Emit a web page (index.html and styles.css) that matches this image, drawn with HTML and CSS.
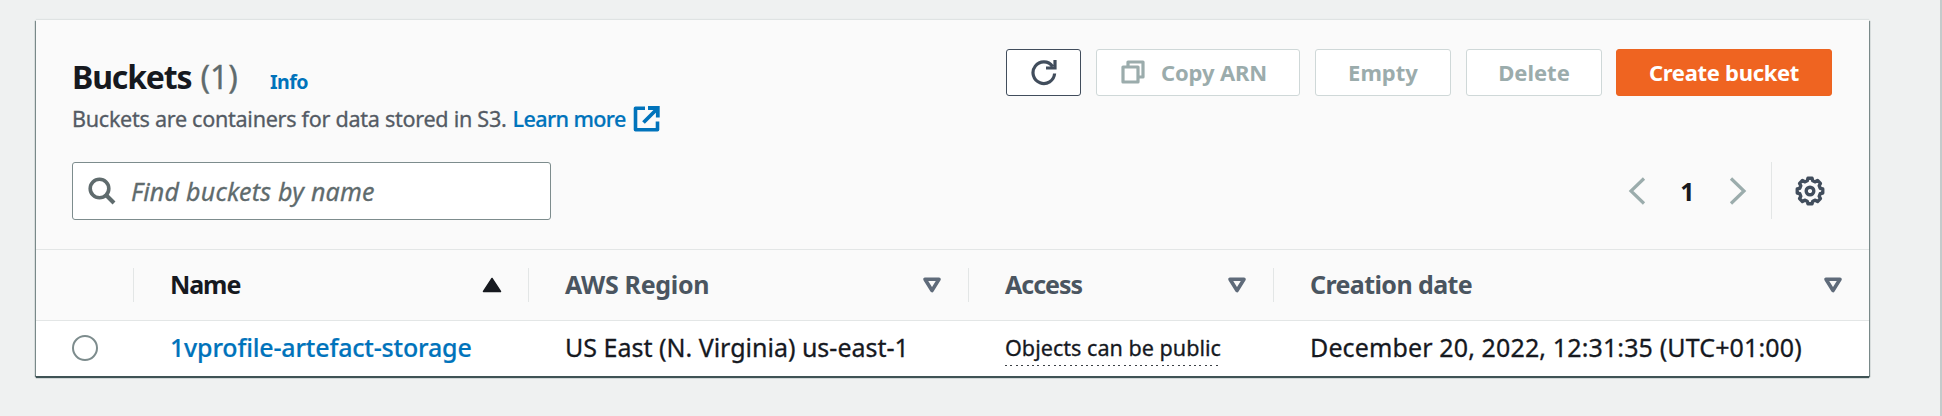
FILE: index.html
```html
<!DOCTYPE html>
<html lang="en">
<head>
<meta charset="utf-8">
<title>Buckets</title>
<link rel="stylesheet" href="styles.css">
</head>
<body>
<main class="panel">
  <header class="head">
    <div class="heading">
      <div class="title-row">
        <h1 class="title">Buckets</h1><span class="count">(1)</span><a class="info">Info</a>
      </div>
      <p class="desc"><span>Buckets are containers for data stored in S3.</span><a class="learn">Learn more</a><svg class="ext" viewBox="0 0 27 26"><path d="M12 2.200H2.500v21.600H24.500V15.500" fill="none" stroke="#0073bb" stroke-width="3.600" stroke-linejoin="round"/><path d="M15 2h9.800v9.500M24 3 10.500 16.500" fill="none" stroke="#0073bb" stroke-width="3.800"/></svg></p>
    </div>
    <div class="actions">
      <button class="btn refresh"><svg width="26" height="26" viewBox="0 0 26 26"><path d="M23.600 13.500A10.800 10.800 0 1 1 21.600 6.400M24 0v8h-9" fill="none" stroke="#414d5c" stroke-width="3.200"/></svg></button>
      <button class="btn off copy"><svg width="24" height="24" viewBox="0 0 24 24"><path d="M2 7h15v15H2zM7 7V2h15v15h-5" fill="none" stroke="#9bacac" stroke-width="3.200" stroke-linejoin="round"/></svg><span>Copy ARN</span></button>
      <button class="btn off small">Empty</button>
      <button class="btn off small">Delete</button>
      <button class="btn primary">Create bucket</button>
    </div>
  </header>
  <div class="tools">
    <div class="search"><svg width="28" height="28" viewBox="0 0 28 28"><circle cx="11.500" cy="11.500" r="9.300" fill="none" stroke="#5f6b6d" stroke-width="3.600"/><path d="m18 18 8 8" stroke="#5f6b6d" stroke-width="4"/></svg><span class="placeholder">Find buckets by name</span></div>
    <div class="pager">
      <svg width="18" height="28" viewBox="0 0 18 28"><path d="M16 1.500 3 14l13 12.500" fill="none" stroke="#9bacac" stroke-width="3.200"/></svg>
      <span class="page">1</span>
      <svg width="18" height="28" viewBox="0 0 18 28"><path d="M2 1.500 15 14 2 26.500" fill="none" stroke="#9bacac" stroke-width="3.200"/></svg>
      <div class="settings"><svg width="30" height="30" viewBox="-15 -15 30 30"><path class="gear" d=""/><circle r="3.800" fill="none" stroke="#414d5c" stroke-width="3.400"/></svg></div>
    </div>
  </div>
  <div class="row labels">
    <div class="cell pick"></div>
    <div class="cell name dark"><span class="t-name">Name</span><svg width="20" height="16" viewBox="0 0 20 16"><path d="M10 1.500 18.500 14.500h-17z" fill="#16191f" stroke="#16191f" stroke-width="1.500" stroke-linejoin="round"/></svg></div>
    <div class="cell region"><span class="t-region">AWS Region</span><svg width="20" height="16" viewBox="0 0 20 16"><path d="M3 2.300h14L10 13.500z" fill="none" stroke="#5f6b7a" stroke-width="3.600" stroke-linejoin="round"/></svg></div>
    <div class="cell access"><span class="t-access">Access</span><svg width="20" height="16" viewBox="0 0 20 16"><path d="M3 2.300h14L10 13.500z" fill="none" stroke="#5f6b7a" stroke-width="3.600" stroke-linejoin="round"/></svg></div>
    <div class="cell date"><span class="t-date">Creation date</span><svg width="20" height="16" viewBox="0 0 20 16"><path d="M3 2.300h14L10 13.500z" fill="none" stroke="#5f6b7a" stroke-width="3.600" stroke-linejoin="round"/></svg></div>
  </div>
  <div class="row item">
    <div class="cell pick"><span class="radio"></span></div>
    <div class="cell name"><a class="bucket">1vprofile-artefact-storage</a></div>
    <div class="cell region"><span>US East (N. Virginia) us-east-1</span></div>
    <div class="cell access"><span class="public">Objects can be public</span></div>
    <div class="cell date"><span class="created">December 20, 2022, 12:31:35 (UTC+01:00)</span></div>
  </div>
</main>
<script src="gear.js"></script>
</body>
</html>
```
FILE: gear.js
```js
// Eight-toothed cog outline.
const points = [];
for (let i = 0; i < 8; i++) {
  for (const [offset, radius] of [[-15, 10.6], [-9, 12.900], [9, 12.900], [15, 10.6]]) {
    const angle = (i * 45 + offset) * Math.PI / 180;
    points.push((Math.cos(angle) * radius).toFixed(2) + " " + (Math.sin(angle) * radius).toFixed(2));
  }
}
document.querySelector(".gear").setAttribute("d", "M" + points.join("L") + "Z");
```
FILE: styles.css
```css
* { box-sizing: border-box; }
body {
  margin: 0;
  height: 416px;
  padding: 20px 71px 0 36px;
  border-right: 2px solid #c3cbcb;
  background: #eff1f1;
  font: 400 25px/34px "Noto Sans", sans-serif;
  color: #16191f;
  overflow: hidden;
  white-space: nowrap;
}
.panel {
  width: 1833px;
  height: 356px;
  background: #fafafa;
  box-shadow: 0 -1px 1px #dfe3e3, 0 2px 1px #3f5355, 1px 1px 1px #6d7d7e, -1px 1px 1px #6d7d7e;
}
.head { display: flex; justify-content: space-between; height: 142px; padding: 29px 37px 0 36px; }
.heading { padding-top: 5px; }
.title-row { display: flex; align-items: baseline; height: 45px; line-height: 45px; }
.title { margin: 0; font-size: 32px; font-weight: 700; letter-spacing: -1.150px; }
.count { margin-left: 9px; font-size: 32px; color: #5f6b6d; }
.info { margin-left: 32px; font-size: 19.600px; font-weight: 700; letter-spacing: -.55px; color: #0073bb; }
.desc { display: flex; align-items: center; margin: 2px 0 0; height: 36px; font-size: 21.600px; letter-spacing: -.29px; color: #545b64; }
.learn { margin-left: 6px; font-weight: 500; letter-spacing: -.6px; color: #0073bb; }
.ext { width: 27px; height: 26px; margin-left: 7px; }
.count, .desc > span, .placeholder, .region > span, .public, .created { -webkit-text-stroke: .3px currentColor; }
.learn, .bucket { -webkit-text-stroke: .2px currentColor; }
.actions { display: flex; gap: 15px; }
.btn {
  display: flex; align-items: center; justify-content: center;
  height: 47px; padding: 0 0 1px; border: 1px solid #414d5c; border-radius: 3px; background: #fff;
  font: 700 22px/30px "Noto Sans", sans-serif; color: #414d5c;
}
.refresh { width: 75px; padding-top: 1px; }
.off { border-color: #cfd8d8; color: #9bacac; }
.copy { width: 204px; gap: 16px; padding-right: 8px; letter-spacing: -.15px; }
.small { width: 136px; }
.primary { width: 216px; margin-left: -1px; border-color: #ec6420; background: #ef6421; color: #fff; letter-spacing: -.3px; }
.tools { display: flex; justify-content: space-between; height: 87px; padding: 0 44px 0 36px; }
.search { display: flex; align-items: center; width: 479px; height: 58px; padding: 0 0 0 15px; border: 1px solid #7d8c8d; border-radius: 3px; background: #fff; }
.placeholder { margin-left: 15px; font-style: italic; letter-spacing: .23px; color: #5f6b6d; }
.pager { display: flex; align-items: center; height: 57px; }
.page { width: 83px; text-align: center; font-weight: 700; }
.settings { display: flex; align-items: center; justify-content: flex-end; width: 54px; height: 57px; margin-left: 24px; border-left: 1px solid #e3e6e6; }
.gear { fill: none; stroke: #414d5c; stroke-width: 3.400; stroke-linejoin: round; }
.row { display: grid; grid-template-columns: 98px 395px 440px 305px 1fr; }
.labels { height: 72px; border-top: 1px solid #e3e6e6; border-bottom: 1px solid #e3e6e6; align-items: center; font-weight: 700; color: #4a5560; }
.labels span { margin-top: -2px; -webkit-text-stroke: 0; }
.item { height: 55px; padding-bottom: 3px; background: #fff; align-items: center; }
.cell { display: flex; align-items: center; justify-content: space-between; height: 34px; padding: 0 26px 0 36px; border-right: 1px solid #e3e6e6; }
.cell.date { padding-right: 26px; border-right: 0; }
.item .cell { border-color: transparent; }
.item .cell.pick { padding-top: 2px; }
.dark { color: #16191f; }
.t-name { letter-spacing: -1.100px; }
.region > .t-region { letter-spacing: -.3px; }
.t-access { letter-spacing: -1px; }
.t-date { letter-spacing: -.6px; }
.radio { width: 26px; height: 26px; border: 2px solid #7d8c8d; border-radius: 50%; }
.region > span { letter-spacing: 0; }
.bucket { font-weight: 500; letter-spacing: -.18px; color: #0073bb; }
.public {
  height: 27px; margin-top: 11px; font-size: 21.600px; line-height: 18px;
  background: repeating-linear-gradient(90deg, #3a3f45 0 2px, transparent 2px 5.400px) left bottom / 100% 1.500px no-repeat;
}
.created { letter-spacing: .13px; }
```
